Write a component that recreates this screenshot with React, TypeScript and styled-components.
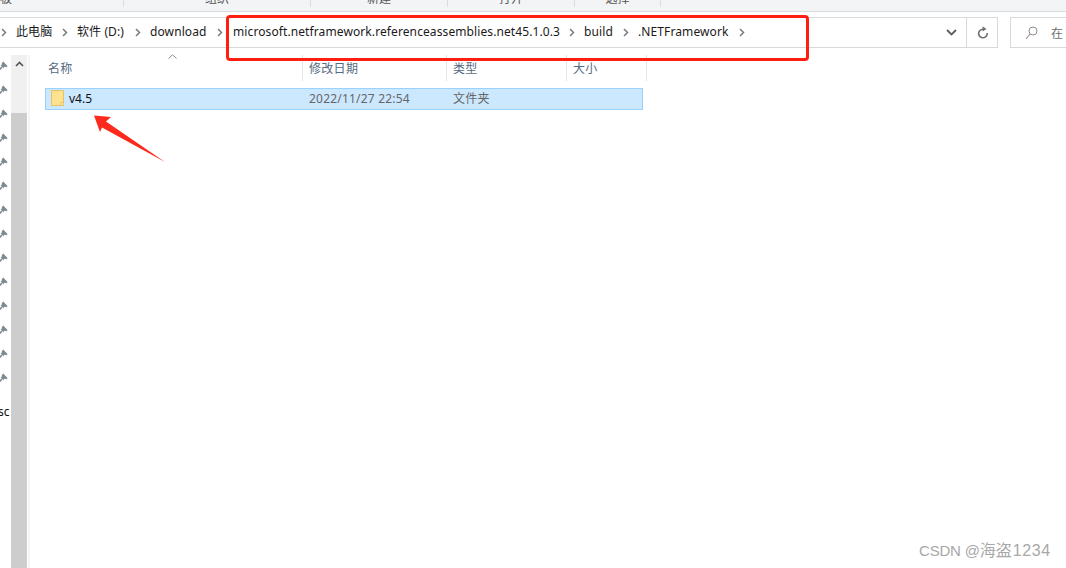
import React from "react";
import styled, { createGlobalStyle } from "styled-components";

const Global = createGlobalStyle`
  html, body { margin: 0; padding: 0; background: #fff; overflow: hidden; }
  * { box-sizing: border-box; }
`;

const Page = styled.div`
  position: relative;
  width: 1066px;
  height: 568px;
  overflow: hidden;
  display: flex;
  flex-direction: column;
  background: #fff;
  font-family: "Noto Sans", "Noto Sans CJK SC", sans-serif;
  font-size: 12px;
`;

const Ribbon = styled.div`
  height: 12px;
  flex: none;
  display: flex;
  background: #f3f4f6;
  border-bottom: 1px solid #dadbdc;
  overflow: hidden;
`;

const RibbonGroup = styled.div<{ $w: number; $start?: boolean }>`
  width: ${(p) => p.$w}px;
  height: 7px;
  flex: none;
  display: flex;
  justify-content: ${(p) => (p.$start ? "flex-start" : "center")};
  border-right: 1px solid #dcdde0;
  color: #555;
  line-height: 16px;
  overflow: visible;
  white-space: nowrap;
`;

const RibbonLabel = styled.span<{ $shift?: number }>`
  display: block;
  margin-top: -9px;
  margin-left: ${(p) => p.$shift ?? 0}px;
`;

const AddressRow = styled.div`
  height: 31px;
  margin-top: 5px;
  flex: none;
  display: flex;
`;

const AddressBox = styled.div`
  width: 998px;
  display: flex;
  align-items: center;
  border: 1px solid #d9d9d9;
  border-left: none;
`;

const Crumbs = styled.div`
  flex: 1;
  display: flex;
  align-items: center;
  height: 100%;
  padding-left: 1px;
  color: #1a1a1a;
  white-space: nowrap;
`;

const Crumb = styled.span<{ $w: number }>`
  width: ${(p) => p.$w}px;
  flex: none;
  line-height: 28px;
  margin-top: -2px;
  letter-spacing: 0.1px;
`;

const Dropdown = styled.div`
  width: 38px;
  height: 100%;
  display: flex;
  align-items: center;
  padding-left: 18px;
  color: #5f5f5f;
`;

const Refresh = styled.div`
  width: 31px;
  height: 100%;
  display: flex;
  align-items: center;
  justify-content: center;
  padding-left: 2px;
  border-left: 1px solid #d9d9d9;
  color: #6e6e6e;
`;

const SearchBox = styled.div`
  margin-left: 12px;
  flex: 1;
  display: flex;
  align-items: center;
  padding-left: 14px;
  gap: 13px;
  border: 1px solid #d9d9d9;
  border-right: none;
  color: #6d6d6d;
  white-space: nowrap;
  overflow: hidden;
`;

const Body = styled.div`
  flex: 1;
  display: flex;
  min-height: 0;
  padding-top: 7px;
`;

const NavPane = styled.div`
  width: 11px;
  flex: none;
  display: flex;
  flex-direction: column;
  overflow: hidden;
`;

const PinList = styled.div`
  margin: -1px 0 0 -1px;
  display: flex;
  flex-direction: column;
`;

const PinSlot = styled.div`
  height: 24px;
  flex: none;
  display: flex;
  align-items: center;
  color: #7f888f;
`;

const NavText = styled.div`
  margin: 14px 0 0 -2px;
  color: #111;
  line-height: 16px;
  font-size: 12px;
`;

const Scrollbar = styled.div`
  width: 16px;
  flex: none;
  display: flex;
  flex-direction: column;
  background: #f0f0f0;
`;

const ScrollArrow = styled.div`
  height: 58px;
  flex: none;
  display: flex;
  justify-content: center;
  padding-top: 6px;
  color: #555;
`;

const ScrollThumb = styled.div`
  flex: 1;
  background: #cdcdcd;
`;

const Content = styled.div`
  flex: 1;
  margin-left: 1px;
  border-left: 2px solid #f5f5f5;
  padding-left: 17px;
  position: relative;
`;

const HeaderRow = styled.div`
  display: flex;
  height: 26px;
`;

const HeaderCell = styled.div<{ $w: number; $pad: number }>`
  width: ${(p) => p.$w}px;
  flex: none;
  display: flex;
  align-items: center;
  padding-left: ${(p) => p.$pad}px;
  border-right: 1px solid #e3e6ea;
  color: #566a80;
  letter-spacing: 0.3px;
`;

const SortArrow = styled.svg`
  position: absolute;
  left: 138px;
  top: -1px;
  color: #8a8a8a;
`;

const FileRow = styled.div`
  margin-top: 7px;
  margin-left: -2px;
  width: 598px;
  height: 22px;
  display: flex;
  align-items: center;
  padding-bottom: 2px;
  background: #cce8ff;
  border: 1px solid #99d1ff;
`;

const NameCell = styled.div`
  width: 263px;
  flex: none;
  display: flex;
  align-items: center;
  gap: 5px;
  padding-left: 5px;
  color: #111;
`;

const DetailCell = styled.div<{ $w: number }>`
  width: ${(p) => p.$w}px;
  flex: none;
  color: #666;
  letter-spacing: 0.2px;
`;

const RedFrame = styled.div`
  position: absolute;
  left: 226px;
  top: 15px;
  width: 583px;
  height: 46px;
  border: 3px solid #ff1f10;
  border-radius: 4px;
  pointer-events: none;
`;

const RedArrow = styled.svg`
  position: absolute;
  left: 90px;
  top: 110px;
`;

const Watermark = styled.div`
  position: absolute;
  left: 919px;
  top: 541px;
  color: #a8a8a8;
  font-family: "Liberation Sans", "Noto Sans CJK SC", sans-serif;
  font-size: 15px;
  line-height: 20px;
  letter-spacing: -0.2px;
  white-space: nowrap;
`;

const WatermarkName = styled.span`
  font-size: 16px;
  letter-spacing: 0;
`;

const WatermarkDigits = styled.span`
  margin-left: 1px;
  font-size: 16px;
  letter-spacing: 0.6px;
`;

const ChevSlot = styled.span<{ $w: number; $start?: boolean }>`
  width: ${(p) => p.$w}px;
  flex: none;
  display: flex;
  justify-content: ${(p) => (p.$start ? "flex-start" : "center")};
`;

const Chev = () => (
  <svg width="6" height="9" viewBox="0 0 6 9">
    <path d="M1 1l3.5 3.5L1 8" fill="none" stroke="#7b7b7b" strokeWidth="1.5" />
  </svg>
);

const Pin = () => (
  <svg width="9" height="10" viewBox="0 0 9 10">
    <path d="M3.4 1.4l4.4 4.4" stroke="currentColor" strokeWidth="2.2" fill="none" />
    <path d="M5.4 3.4L3 5.8" stroke="currentColor" strokeWidth="3.6" fill="none" />
    <path d="M3 6L0.4 8.8" stroke="currentColor" strokeWidth="1.5" fill="none" />
  </svg>
);

const crumbs: [string, number, number][] = [
  ["此电脑", 36, 25],
  ["软件 (D:)", 48, 25],
  ["download", 57, 26],
  ["microsoft.netframework.referenceassemblies.net45.1.0.3", 326, 25],
  ["build", 29, 25],
  [".NETFramework", 93, 22],
];

const groups = [
  { w: 124, t: "剪贴板", start: true, shift: -24 },
  { w: 187, t: "组织" },
  { w: 137, t: "新建" },
  { w: 127, t: "打开" },
  { w: 86, t: "选择" },
];

const columns = [
  { w: 256, t: "名称", pad: 1 },
  { w: 144, t: "修改日期", pad: 6 },
  { w: 120, t: "类型", pad: 6 },
  { w: 80, t: "大小", pad: 6 },
];

export default function App() {
  return (
    <Page>
      <Global />
      <Ribbon>
        {groups.map((g) => (
          <RibbonGroup key={g.t} $w={g.w} $start={g.start}>
            <RibbonLabel $shift={g.shift}>{g.t}</RibbonLabel>
          </RibbonGroup>
        ))}
      </Ribbon>

      <AddressRow>
        <AddressBox>
          <Crumbs>
            <ChevSlot $w={15} $start>
              <Chev />
            </ChevSlot>
            {crumbs.map(([t, w, gap]) => (
              <React.Fragment key={t}>
                <Crumb $w={w}>{t}</Crumb>
                <ChevSlot $w={gap}>
                  <Chev />
                </ChevSlot>
              </React.Fragment>
            ))}
          </Crumbs>
          <Dropdown>
            <svg width="11" height="7" viewBox="0 0 11 7">
              <path d="M1 1l4.5 4.5L10 1" fill="none" stroke="currentColor" strokeWidth="1.8" />
            </svg>
          </Dropdown>
          <Refresh>
            <svg width="12" height="13" viewBox="0 0 12 13">
              <path d="M6 3.2A4.3 4.3 0 1 0 10.2 7" fill="none" stroke="currentColor" strokeWidth="1.6" />
              <path d="M5.6 0.2L9.4 3 5.6 5.6z" fill="currentColor" />
            </svg>
          </Refresh>
        </AddressBox>
        <SearchBox>
          <svg width="13" height="14" viewBox="0 0 13 14">
            <circle cx="8" cy="5" r="4" fill="none" stroke="#8e8e8e" strokeWidth="1" />
            <path d="M5 8l-4 5" stroke="#a58f9a" strokeWidth="1.2" fill="none" />
          </svg>
          <span>在</span>
        </SearchBox>
      </AddressRow>

      <Body>
        <NavPane>
          <PinList>
            {Array.from({ length: 14 }, (_, i) => (
              <PinSlot key={i}>
                <Pin />
              </PinSlot>
            ))}
          </PinList>
          <NavText>sc</NavText>
        </NavPane>
        <Scrollbar>
          <ScrollArrow>
            <svg width="9" height="6" viewBox="0 0 9 6">
              <path d="M1 5l3.5-3.5L8 5" fill="none" stroke="currentColor" strokeWidth="1.6" />
            </svg>
          </ScrollArrow>
          <ScrollThumb />
        </Scrollbar>
        <Content>
          <SortArrow width="9" height="5" viewBox="0 0 9 5">
            <path d="M0.5 4.5L4.5 0.8l4 3.7" fill="none" stroke="currentColor" strokeWidth="1" />
          </SortArrow>
          <HeaderRow>
            {columns.map((c) => (
              <HeaderCell key={c.t} $w={c.w} $pad={c.pad}>
                {c.t}
              </HeaderCell>
            ))}
          </HeaderRow>
          <FileRow>
            <NameCell>
              <svg width="13" height="16" viewBox="0 0 13 16">
                <path d="M0.5 0.5h12v15H0.5z" fill="#ffe28f" stroke="#e8c266" />
                <path d="M10 15.5v-3h2.5v3z" fill="#fff3c4" stroke="#e8c266" />
              </svg>
              v4.5
            </NameCell>
            <DetailCell $w={144}>2022/11/27 22:54</DetailCell>
            <DetailCell $w={100}>文件夹</DetailCell>
          </FileRow>
        </Content>
      </Body>

      <RedFrame />
      <RedArrow width="80" height="56" viewBox="90 110 80 56">
        <path d="M94 115.5L111 117 106 121.5 165 162 102 127.5 100 132z" fill="#fb2a1c" />
      </RedArrow>
      <Watermark>
        CSDN @<WatermarkName>海盗</WatermarkName>
        <WatermarkDigits>1234</WatermarkDigits>
      </Watermark>
    </Page>
  );
}
